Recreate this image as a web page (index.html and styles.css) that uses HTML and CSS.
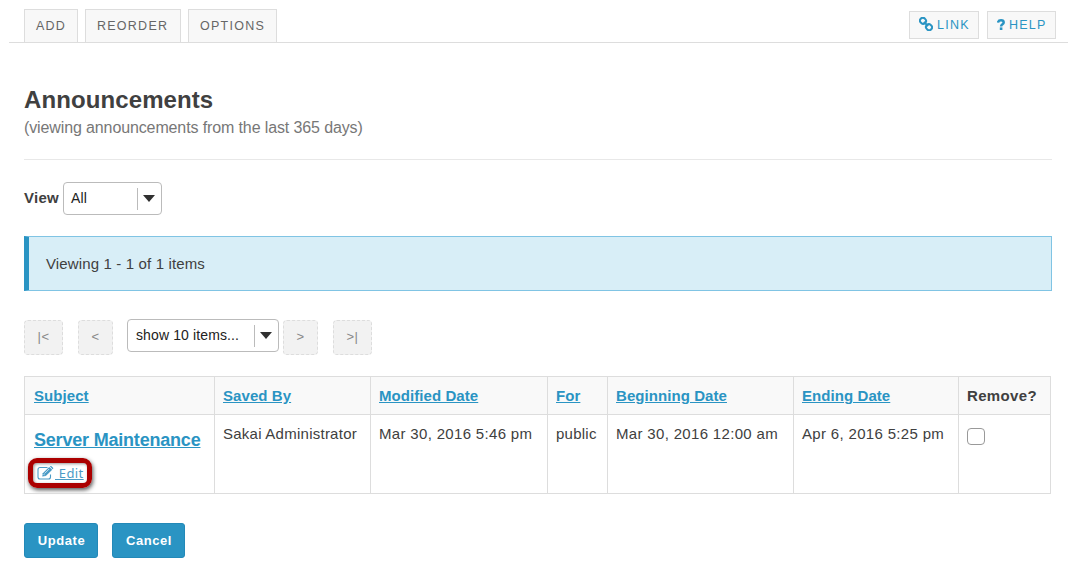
FILE: index.html
```html
<!DOCTYPE html>
<html lang="en">
<head>
<meta charset="utf-8">
<title>Announcements</title>
<link rel="stylesheet" href="styles.css">
</head>
<body>
<header class="toolbar">
  <nav class="tabs">
    <a class="tab tab-add">ADD</a>
    <a class="tab tab-reorder">REORDER</a>
    <a class="tab tab-options">OPTIONS</a>
  </nav>
  <div class="tools">
    <a class="tool tool-link"><svg class="icon-link" viewBox="0 0 14 14"><g fill="none" stroke="currentColor" stroke-width="2"><rect x="1" y="1" width="6" height="5.600" rx="2.600" transform="rotate(45 4 3.800)"/><rect x="7" y="7.400" width="6" height="5.600" rx="2.600" transform="rotate(45 10 10.200)"/><path d="M4.800 5 9.200 9"/></g></svg><span class="t-link">LINK</span></a>
    <a class="tool tool-help"><svg class="icon-help" viewBox="0 0 8 11"><path d="M1 3.600C1.300 2 2.400 1.300 4 1.300c1.600 0 2.700.8 2.700 2.100 0 1.900-2.600 1.700-2.600 4" fill="none" stroke="currentColor" stroke-width="2.500"/><path d="M2.800 8.400h2.600V11H2.800z" fill="currentColor"/></svg><span class="t-help">HELP</span></a>
  </div>
</header>
<main class="content">
  <div class="heading">
    <h1 class="title">Announcements</h1>
    <p class="subtitle">(viewing announcements from the last 365 days)</p>
  </div>
  <div class="view-row">
    <label class="view-label">View</label>
    <div class="select select-view"><span class="t-all">All</span><i class="arrow"><svg viewBox="0 0 12 7"><path d="M0 0h12L6 7z"/></svg></i></div>
  </div>
  <div class="info"><span class="t-info">Viewing 1 - 1 of 1 items</span></div>
  <div class="pager">
    <button class="page edge" disabled>|&lt;</button>
    <button class="page" disabled>&lt;</button>
    <div class="select select-size"><span class="t-size">show 10 items...</span><i class="arrow"><svg viewBox="0 0 12 7"><path d="M0 0h12L6 7z"/></svg></i></div>
    <button class="page next" disabled>&gt;</button>
    <button class="page edge" disabled>&gt;|</button>
  </div>
  <table class="list">
    <colgroup><col class="c1"><col class="c2"><col class="c3"><col class="c4"><col class="c5"><col class="c6"><col class="c7"></colgroup>
    <thead>
      <tr><th><a>Subject</a></th><th><a>Saved By</a></th><th><a>Modified Date</a></th><th><a>For</a></th><th><a>Beginning Date</a></th><th><a>Ending Date</a></th><th>Remove?</th></tr>
    </thead>
    <tbody>
      <tr>
        <td class="subject"><a class="name">Server Maintenance</a><a class="edit"><svg class="icon-edit" viewBox="0 0 18 14"><path d="M13.500 8.500V11a2 2 0 0 1-2 2H3a2 2 0 0 1-2-2V3.500a2 2 0 0 1 2-2h7.500" fill="none" stroke="currentColor" stroke-width="1.100"/><path d="M5.200 10.600 5.800 7.200 12.200.9l3 2.900-6.400 6.300z" fill="currentColor"/><path d="m12.900.4.6-.3q.5-.3 1 .1l1.600 1.500q.4.5 0 1l-.5.5z" fill="currentColor"/><path d="m7.600 7.500 4.500-4.500M6.600 8.100l1.200 1.200" stroke="#fff" stroke-width=".7"/></svg><span class="edit-text">&nbsp;Edit</span></a></td>
        <td>Sakai Administrator</td><td class="date">Mar 30, 2016 5:46 pm</td><td>public</td><td class="date">Mar 30, 2016 12:00 am</td><td class="date">Apr 6, 2016 5:25 pm</td>
        <td class="remove"><input class="check" type="checkbox" aria-label="Remove"></td>
      </tr>
    </tbody>
  </table>
  <div class="actions"><button class="btn btn-update">Update</button><button class="btn btn-cancel">Cancel</button></div>
</main>
</body>
</html>
```
FILE: styles.css
```css
* { box-sizing: border-box; }
body { margin: 0; background: #fff; color: #404040; font-family: "Liberation Sans", Arial, sans-serif; font-size: 15px; letter-spacing: .25px; overflow: hidden; }
.toolbar { display: flex; justify-content: space-between; height: 43px; margin-left: 9px; padding: 9px 12px 0 15px; border-bottom: 1px solid #ddd; }
.tabs { display: flex; gap: 7px; }
.tab { height: 33px; padding-left: 11px; border: 1px solid #ddd; border-bottom: 0; background: #f8f8f8; color: #666; font-size: 12.5px; line-height: 32px; letter-spacing: 1.25px; white-space: nowrap; }
.tab-add { width: 54px; }
.tab-reorder { width: 96px; }
.tab-options { width: 89px; }
.tools { display: flex; gap: 8px; padding-top: 2px; }
.tool { display: flex; align-items: center; height: 28px; border: 1px solid #ddd; background: #f8f8f8; color: #2a94c3; font-size: 12.5px; letter-spacing: 1.25px; white-space: nowrap; padding-left: 9px; }
.tool-link { width: 70px; }
.tool-help { width: 69px; }
.icon-link { width: 14px; height: 14px; margin: -3px 4px 0 0; }
.icon-help { width: 8px; height: 11px; margin: -1px 4px 0 0; }
.content { padding: 0 16px 0 24px; }
.heading { height: 117px; padding-top: 43px; border-bottom: 1px solid #e8e8e8; }
.title { margin: 0; font-size: 24px; line-height: 28px; letter-spacing: .1px; }
.subtitle { margin: 4px 0 0; color: #777; font-size: 16px; line-height: 20px; letter-spacing: -.12px; }
.view-row { display: flex; align-items: center; gap: 4px; margin-top: 22px; height: 33px; }
.view-label { width: 35px; margin-top: -2px; font-weight: bold; }
.select { display: flex; align-items: center; justify-content: space-between; height: 33px; padding-left: 8px; border: 1px solid #bbb; border-radius: 4px; color: #222; font-size: 14px; letter-spacing: .12px; }
.select span { margin-top: -1px; }
.select-view { width: 99px; padding-left: 7px; }
.select-size { width: 152px; margin-left: 14px; }
.arrow { display: flex; align-items: center; width: 24px; height: 22px; padding-left: 5px; border-left: 1px solid #bbb; }
.arrow svg { width: 12px; height: 7px; fill: #303030; }
.info { height: 55px; margin-top: 21px; padding-left: 17px; border: 1px solid #80c4e4; border-left: 5px solid #2a94c3; background: #d8eef7; line-height: 54px; letter-spacing: .14px; }
.pager { display: flex; height: 36px; margin-top: 28px; }
.page { width: 35px; height: 35px; margin: 1px 0 0 15px; padding: 0 0 2px; border: 1px dashed #ddd; border-radius: 4px; background: #f2f2f2; color: #888; font: 13px "Liberation Sans", Arial, sans-serif; letter-spacing: .6px; }
.page.edge { width: 39px; }
.page:first-child { margin-left: 0; }
.page.next { margin-left: 4px; }
.list { width: 1027px; margin-top: 21px; border-collapse: collapse; table-layout: fixed; }
.c1 { width: 190px; }
.c2 { width: 156px; }
.c3 { width: 177px; }
.c4 { width: 60px; }
.c5 { width: 186px; }
.c6 { width: 165px; }
.c7 { width: 92px; }
.list th, .list td { border: 1px solid #ddd; padding: 0 0 0 8px; text-align: left; white-space: nowrap; }
.list th { height: 38px; background: #f9f9f9; font-size: 15px; letter-spacing: .35px; }
.list th:first-child { padding-left: 9px; }
.list th a { letter-spacing: .07px; }
.list th a, .name { color: #2a94c3; text-decoration: underline; }
.list td { height: 79px; padding-top: 10px; vertical-align: top; line-height: 18px; }
.list .date { letter-spacing: .33px; }
.list .subject { padding: 14px 0 0 3px; }
.name { display: block; margin-left: 6px; font-size: 18px; font-weight: bold; line-height: 22px; letter-spacing: -.2px; }
.edit { display: flex; align-items: center; width: 64px; height: 30px; margin-top: 7px; padding: 0 0 1px 4px; border: 5px solid #ab0000; border-radius: 9px; box-shadow: 1px 2px 4px #555, inset 1px 1px 3px #999; color: #4a9bc6; }
.icon-edit { width: 18px; height: 14px; flex: none; }
.edit-text { font: 13px/18px "Noto Sans", sans-serif; letter-spacing: .4px; text-decoration: underline; }
.list .remove { padding-top: 13px; }
.check { display: block; appearance: none; width: 18px; height: 17px; margin: 0; border: 1px solid #999; border-radius: 4px; background: #fff; }
.actions { display: flex; gap: 14px; margin-top: 29px; }
.btn { width: 74px; height: 35px; padding: 0 0 0 1px; border: 1px solid #2389b8; border-radius: 3px; background: #2a94c3; color: #fff; font: bold 13px "Liberation Sans", Arial, sans-serif; letter-spacing: .55px; }
.btn-cancel { width: 73px; }
```
